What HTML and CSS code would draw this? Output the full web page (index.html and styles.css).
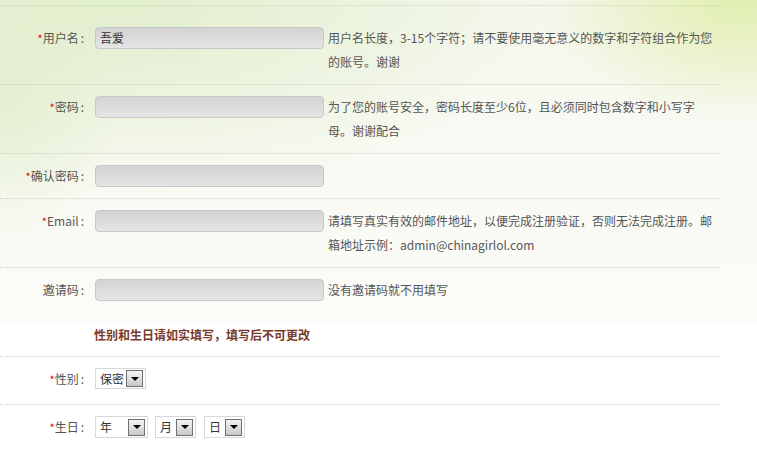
FILE: index.html
```html
<!DOCTYPE html>
<html lang="zh-CN">
<head>
<meta charset="utf-8">
<title>注册</title>
<link rel="stylesheet" href="styles.css">
</head>
<body>
<div class="panel">
  <div class="form form-top">
    <div class="row row-first">
      <div class="label"><span class="req">*</span>用户名<span class="colon">:</span></div>
      <div class="input">吾爱</div>
      <div class="hint">用户名长度，3-15个字符；请不要使用毫无意义的数字和字符组合作为您<br>的账号。谢谢</div>
    </div>
    <div class="row">
      <div class="label"><span class="req">*</span>密码<span class="colon">:</span></div>
      <div class="input"></div>
      <div class="hint">为了您的账号安全，密码长度至少6位，且必须同时包含数字和小写字<br>母。谢谢配合</div>
    </div>
    <div class="row">
      <div class="label"><span class="req">*</span>确认密码<span class="colon">:</span></div>
      <div class="input"></div>
    </div>
    <div class="row">
      <div class="label"><span class="req">*</span>Email<span class="colon">:</span></div>
      <div class="input"></div>
      <div class="hint">请填写真实有效的邮件地址，以便完成注册验证，否则无法完成注册。邮<br>箱地址示例：admin@chinagirlol.com</div>
    </div>
    <div class="row row-last">
      <div class="label">邀请码<span class="colon">:</span></div>
      <div class="input"></div>
      <div class="hint">没有邀请码就不用填写</div>
    </div>
  </div>
</div>
<div class="form form-bottom">
  <div class="notice">性别和生日请如实填写，填写后不可更改</div>
  <div class="row row-select">
    <div class="label"><span class="req">*</span>性别<span class="colon">:</span></div>
    <div class="select sel-sex"><span class="sel-text">保密</span><span class="arrow"></span></div>
  </div>
  <div class="row row-select row-end">
    <div class="label"><span class="req">*</span>生日<span class="colon">:</span></div>
    <div class="selects">
      <div class="select sel-year"><span class="sel-text">年</span><span class="arrow"></span></div>
      <div class="select sel-month"><span class="sel-text">月</span><span class="arrow"></span></div>
      <div class="select sel-day"><span class="sel-text">日</span><span class="arrow"></span></div>
    </div>
  </div>
</div>
</body>
</html>
```

FILE: styles.css
```css
html, body {
  margin: 0;
  padding: 0;
  background: #ffffff;
}

body {
  font-family: "Noto Sans CJK SC", "Noto Sans", sans-serif;
  font-size: 12px;
  color: #555555;
  width: 757px;
  height: 453px;
  overflow: hidden;
}

.panel {
  padding-top: 5px;
  height: 317px;
  background:
    radial-gradient(ellipse 200px 120px at 740px 0px, rgba(220, 236, 160, 0.8), rgba(220, 236, 160, 0) 100%),
    radial-gradient(ellipse 420px 200px at 120px 0px, rgba(220, 236, 196, 0.8), rgba(220, 236, 196, 0) 100%),
    radial-gradient(ellipse 120px 170px at 0px 90px, rgba(225, 238, 205, 0.75), rgba(225, 238, 205, 0) 100%),
    linear-gradient(#f4f7ec, #fafaf5 60%, #fbfbf7);
}

.form {
  width: 720px;
}

.form-top {
  border-top: 1px dotted #cfcfcf;
}

.row {
  display: flex;
  align-items: flex-start;
  padding: 10px 0;
  line-height: 24px;
  border-bottom: 1px dotted #cfcfcf;
}

.row-first {
  padding-top: 20px;
}

.row-last {
  border-bottom: none;
  padding-bottom: 20px;
}

.label {
  width: 84px;
  flex: none;
  text-align: right;
  margin-right: 11px;
  color: #555555;
  white-space: nowrap;
}

.colon {
  margin-left: 2px;
}

.req {
  color: #e60000;
  font-size: 11px;
}

.input {
  flex: none;
  box-sizing: border-box;
  width: 229px;
  height: 22px;
  margin-top: 1px;
  border: 1px solid #c8c8c8;
  border-radius: 4px;
  background: linear-gradient(#d3d3d3, #e5e5e5);
  padding-left: 4px;
  line-height: 20px;
  color: #333333;
}

.hint {
  margin-left: 4px;
  width: 392px;
  color: #555555;
}

.notice {
  padding: 1px 0 9px 94px;
  line-height: 24px;
  font-weight: bold;
  color: #7a3a2c;
  border-bottom: 1px dotted #cfcfcf;
}

.row-select {
  padding: 10px 0 13px;
}

.row-end {
  border-bottom: none;
}

.selects {
  display: flex;
}

.select {
  box-sizing: border-box;
  display: flex;
  align-items: center;
  height: 22px;
  margin-top: 1px;
  border: 1px solid #d8d8d8;
  background: #ffffff;
  padding-left: 4px;
  padding-right: 2px;
  color: #333333;
  line-height: 20px;
}

.sel-text {
  flex: 1;
}

.sel-sex { width: 51px; height: 21px; }
.sel-year { width: 53px; }
.sel-month { width: 41px; margin-left: 7px; }
.sel-day { width: 41px; margin-left: 8px; }

.arrow {
  flex: none;
  box-sizing: border-box;
  width: 17px;
  height: 17px;
  border: 1px solid #707070;
  background: linear-gradient(#f4f4f4, #c8c8c8);
  display: flex;
  align-items: center;
  justify-content: center;
}

.arrow::after {
  content: "";
  width: 0;
  height: 0;
  border-left: 4px solid transparent;
  border-right: 4px solid transparent;
  border-top: 4px solid #000000;
}
```
